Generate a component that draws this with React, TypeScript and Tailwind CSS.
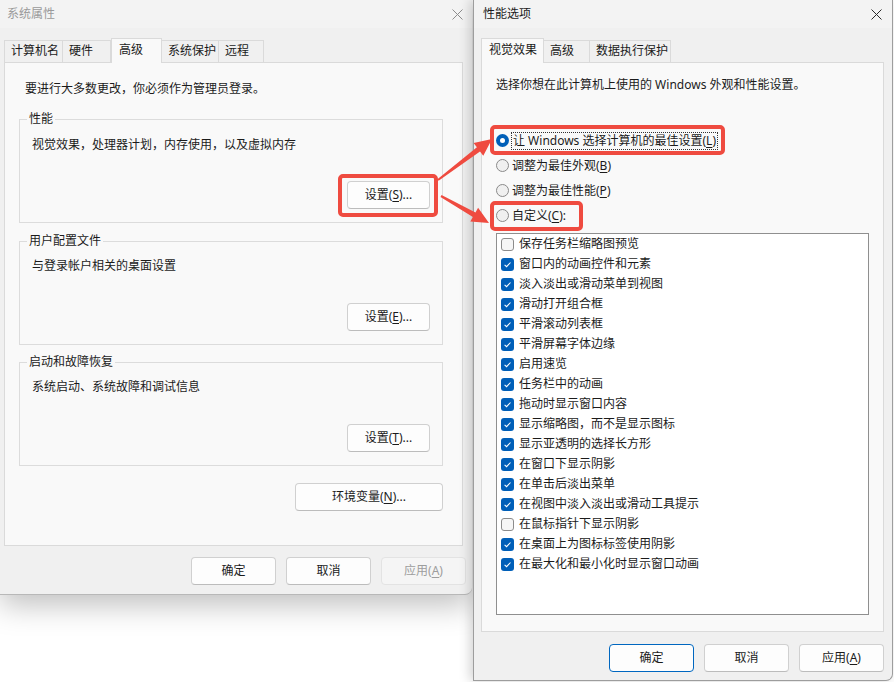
import React from 'react';

const M = ({ c }: { c: string }) => <span className="underline underline-offset-[2px]">{c}</span>;

const CloseIcon = ({ color }: { color: string }) => (
  <svg width="11" height="11" viewBox="0 0 11 11">
    <path d="M0.5 0.5 L10.5 10.5 M10.5 0.5 L0.5 10.5" stroke={color} strokeWidth="1" fill="none" />
  </svg>
);

interface BtnProps {
  children: React.ReactNode;
  className?: string;
  disabled?: boolean;
  primary?: boolean;
}

const Btn = ({ children, className = '', disabled = false, primary = false }: BtnProps) => {
  let look = 'bg-[#fdfdfd] border-[#d0d0d0] border-b-[#bcbcbc] text-[#1b1b1b]';
  if (disabled) look = 'bg-[#f5f5f5] border-[#e3e3e3] text-[#9d9d9d]';
  if (primary) look = 'bg-[#fdfdfd] border-[#0067c0] text-[#1b1b1b]';
  return (
    <div className={`flex h-[28px] items-center justify-center rounded-[4px] border text-[12px] leading-[16px] ${look} ${className}`}>
      {children}
    </div>
  );
};

const Tab = ({ label, w, active = false }: { label: string; w: string; active?: boolean }) => (
  <div
    className={
      active
        ? `relative z-10 -mb-px flex h-[25px] items-start border border-b-0 border-[#dadada] bg-[#f9f9f9] pt-[3px] pl-[7px] ${w}`
        : `-ml-px flex h-[22px] items-start border border-b-0 border-[#dadada] bg-[#f0f0f0] pt-[2px] pl-[6px] ${w}`
    }
  >
    <span className="text-[12px] leading-[16px]">{label}</span>
  </div>
);

const Group = ({ title, text, children, pt }: { title: string; text: string; children: React.ReactNode; pt: string }) => (
  <div className="relative ml-[14px] h-[104px] w-[424px] border border-[#dcdcdc]">
    <span className="absolute -top-[9px] left-[7px] bg-[#f9f9f9] px-[2px] text-[12px] leading-[16px]">{title}</span>
    <div className={`flex h-full flex-col justify-between px-[12px] pb-[13px] ${pt}`}>
      <div className="text-[12px] leading-[16px]">{text}</div>
      {children}
    </div>
  </div>
);

const RedBox = ({ className }: { className: string }) => (
  <div className={`pointer-events-none absolute rounded-[5px] border-[4px] border-[#ef4b40] ${className}`} />
);

const Radio = ({ on }: { on?: boolean }) =>
  on ? (
    <div className="flex h-[13px] w-[13px] items-center justify-center rounded-full bg-[#005fb8]">
      <div className="h-[5px] w-[5px] rounded-full bg-white" />
    </div>
  ) : (
    <div className="h-[13px] w-[13px] rounded-full border border-[#8a8a8a] bg-[#f0f0f0]" />
  );

const Check = ({ on }: { on: boolean }) =>
  on ? (
    <div className="flex h-[13px] w-[13px] items-center justify-center rounded-[3px] bg-[#005fb8]">
      <svg width="13" height="13" viewBox="0 0 13 13">
        <path d="M3.6 6.8 L5.6 8.7 L9.5 4.5" stroke="white" strokeWidth="1.1" fill="none" />
      </svg>
    </div>
  ) : (
    <div className="h-[13px] w-[13px] rounded-[3px] border border-[#8c8c8c] bg-[#f6f6f6]" />
  );

const effects: [string, boolean][] = [
  ['保存任务栏缩略图预览', false],
  ['窗口内的动画控件和元素', true],
  ['淡入淡出或滑动菜单到视图', true],
  ['滑动打开组合框', true],
  ['平滑滚动列表框', true],
  ['平滑屏幕字体边缘', true],
  ['启用速览', true],
  ['任务栏中的动画', true],
  ['拖动时显示窗口内容', true],
  ['显示缩略图，而不是显示图标', true],
  ['显示亚透明的选择长方形', true],
  ['在窗口下显示阴影', true],
  ['在单击后淡出菜单', true],
  ['在视图中淡入淡出或滑动工具提示', true],
  ['在鼠标指针下显示阴影', false],
  ['在桌面上为图标标签使用阴影', true],
  ['在最大化和最小化时显示窗口动画', true],
];

function arrow(x1: number, y1: number, x2: number, y2: number) {
  const dx = x2 - x1;
  const dy = y2 - y1;
  const len = Math.hypot(dx, dy);
  const ux = dx / len;
  const uy = dy / len;
  const nx = -uy;
  const ny = ux;
  const H = 17;
  const W = 8;
  const w0 = 1;
  const w1 = 2.6;
  const bx = x2 - ux * H;
  const by = y2 - uy * H;
  const pts = [
    [x1 + nx * w0, y1 + ny * w0],
    [bx + nx * w1, by + ny * w1],
    [bx + nx * W, by + ny * W],
    [x2, y2],
    [bx - nx * W, by - ny * W],
    [bx - nx * w1, by - ny * w1],
    [x1 - nx * w0, y1 - ny * w0],
  ];
  return pts.map((p) => `${p[0].toFixed(1)},${p[1].toFixed(1)}`).join(' ');
}

export default function App() {
  return (
    <div className="relative flex h-[682px] w-[894px] items-start overflow-hidden bg-white font-['Noto_Sans','Noto_Sans_CJK_SC',sans-serif] text-[#1b1b1b]">
      {/* 系统属性 */}
      <div className="relative z-0 flex h-[595px] w-[472px] shrink-0 flex-col rounded-br-[7px] border-b border-[#b8b8b8] bg-[#f0f0f0] shadow-[0_10px_30px_rgba(0,0,0,0.25)]">
        <div className="flex h-[28px] items-center justify-between bg-[#f3f3f3] pl-[7px] pr-[9px]">
          <span className="text-[12px] leading-[16px] text-[#9a9a9a]">系统属性</span>
          <CloseIcon color="#8c8c8c" />
        </div>
        <div className="flex h-[34px] items-end pl-[5px]">
          <Tab label="计算机名" w="w-[59px]" />
          <Tab label="硬件" w="w-[49px]" />
          <Tab label="高级" w="w-[51px]" active />
          <Tab label="系统保护" w="w-[58px]" />
          <Tab label="远程" w="w-[46px]" />
        </div>
        <div className="ml-[4px] flex h-[484px] w-[459px] flex-col border border-[#dadada] bg-[#f9f9f9]">
          <div className="pl-[20px] pt-[18px] text-[12px] leading-[16px]">要进行大多数更改，你必须作为管理员登录。</div>
          <div className="mt-[22px]">
            <Group title="性能" text="视觉效果，处理器计划，内存使用，以及虚拟内存" pt="pt-[17px]">
              <div className="relative self-end">
                <Btn className="w-[83px]">设置(<M c="S" />)...</Btn>
                <RedBox className="-left-[9px] -right-[8px] -top-[7px] -bottom-[8px]" />
              </div>
            </Group>
          </div>
          <div className="mt-[18px]">
            <Group title="用户配置文件" text="与登录帐户相关的桌面设置" pt="pt-[16px]">
              <Btn className="w-[83px] self-end">设置(<M c="E" />)...</Btn>
            </Group>
          </div>
          <div className="mt-[17px]">
            <Group title="启动和故障恢复" text="系统启动、系统故障和调试信息" pt="pt-[16px]">
              <Btn className="w-[83px] self-end">设置(<M c="T" />)...</Btn>
            </Group>
          </div>
          <div className="ml-[14px] mt-[17px] flex w-[424px] justify-end">
            <Btn className="w-[148px]">环境变量(<M c="N" />)...</Btn>
          </div>
        </div>
        <div className="mt-[11px] flex justify-end gap-[10px] pr-[6px]">
          <Btn className="w-[85px]">确定</Btn>
          <Btn className="w-[85px]">取消</Btn>
          <Btn className="w-[85px]" disabled>
            应用(<M c="A" />)
          </Btn>
        </div>
      </div>

      {/* 性能选项 */}
      <div className="relative z-10 ml-px flex h-[681px] w-[420px] shrink-0 flex-col rounded-br-[7px] border-b border-l border-r border-[#9d9d9d] bg-[#f0f0f0] shadow-[-3px_0_12px_rgba(0,0,0,0.18)]">
        <div className="flex h-[28px] items-center justify-between bg-[#f3f3f3] pl-[9px] pr-[10px]">
          <span className="text-[12px] leading-[16px]">性能选项</span>
          <CloseIcon color="#2a2a2a" />
        </div>
        <div className="flex h-[34px] items-end pl-[7px]">
          <Tab label="视觉效果" w="w-[63px]" active />
          <Tab label="高级" w="w-[47px]" />
          <Tab label="数据执行保护" w="w-[82px]" />
        </div>
        <div className="ml-[7px] flex h-[570px] w-[403px] flex-col border border-[#dadada] bg-[#f9f9f9] pl-[14px]">
          <div className="pt-[14px] text-[12px] leading-[16px]">选择你想在此计算机上使用的 Windows 外观和性能设置。</div>
          <div className="mt-[35px] flex flex-col">
            <div className="relative flex h-[25px] items-center gap-[2px]">
              <Radio on />
              <span className="border border-dotted border-[#333] px-px text-[12px] leading-[16px]">
                让 Windows 选择计算机的最佳设置(<M c="L" />)
              </span>
              <RedBox className="-left-[6px] -top-[3px] h-[30px] w-[235px]" />
            </div>
            <div className="flex h-[25px] items-center gap-[3px]">
              <Radio />
              <span className="text-[12px] leading-[16px]">
                调整为最佳外观(<M c="B" />)
              </span>
            </div>
            <div className="flex h-[25px] items-center gap-[3px]">
              <Radio />
              <span className="text-[12px] leading-[16px]">
                调整为最佳性能(<M c="P" />)
              </span>
            </div>
            <div className="relative flex h-[25px] items-center gap-[3px]">
              <Radio />
              <span className="text-[12px] leading-[16px]">
                自定义(<M c="C" />):
              </span>
              <RedBox className="-left-[6px] -top-[2px] h-[30px] w-[93px]" />
            </div>
          </div>
          <div className="mt-[5px] h-[382px] w-[373px] border border-[#8f8f8f] bg-white">
            {effects.map(([label, on]) => (
              <div key={label} className="flex h-[20px] items-center gap-[5px] pl-[4px]">
                <Check on={on} />
                <span className="text-[12px] leading-[16px]">{label}</span>
              </div>
            ))}
          </div>
        </div>
        <div className="mt-[12px] flex justify-end gap-[10px] pr-[8px]">
          <Btn className="w-[85px]" primary>
            确定
          </Btn>
          <Btn className="w-[85px]">取消</Btn>
          <Btn className="w-[85px]">
            应用(<M c="A" />)
          </Btn>
        </div>
      </div>

      {/* annotation arrows */}
      <svg className="pointer-events-none absolute left-0 top-0 z-20" width="894" height="682">
        <polygon points={arrow(438, 180, 492, 139)} fill="#ef4b40" />
        <polygon points={arrow(441, 196, 489, 223)} fill="#ef4b40" />
      </svg>
    </div>
  );
}
